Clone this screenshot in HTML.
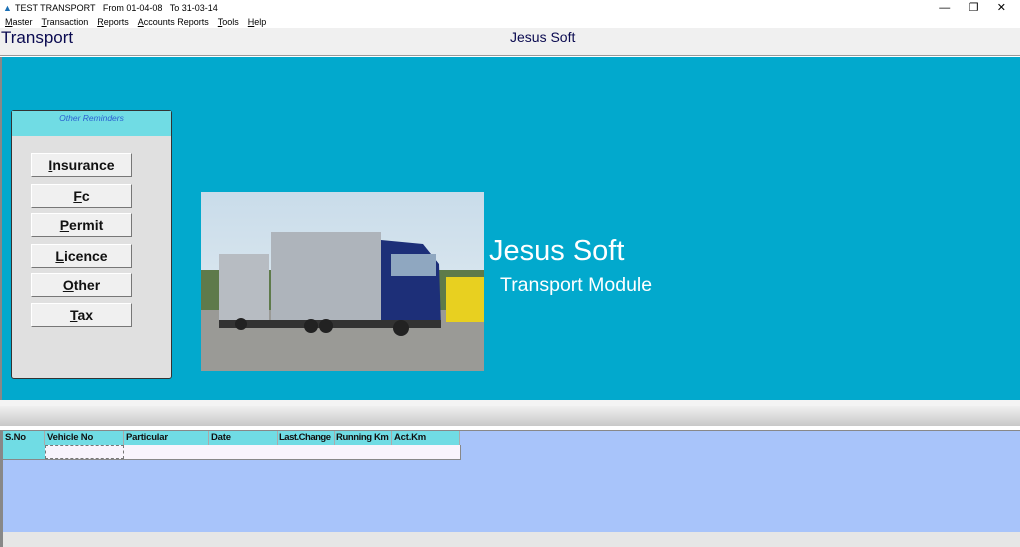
<!DOCTYPE html><html><head><style>
*{margin:0;padding:0;box-sizing:border-box}
body{width:1020px;height:547px;position:relative;overflow:hidden;background:#fff;font-family:"Liberation Sans",sans-serif}
.a{position:absolute}
.menu span{margin-right:9px}
.btn{position:absolute;left:31px;width:101px;height:24px;background:#f0f0f0;border:1px solid #fff;border-right-color:#777;border-bottom-color:#777;font-weight:bold;font-size:14px;text-align:center;line-height:22px;color:#111}
.th{position:absolute;top:431px;height:14px;background:#70dce4;border-right:1px solid #aaa;font-size:9.5px;font-weight:bold;padding-left:2px;line-height:14px;color:#111;white-space:nowrap;overflow:hidden;letter-spacing:-0.2px}
</style></head><body>
<div class="a" style="left:3px;top:3px;font-size:9px;color:#1a6fb5">▲</div>
<div class="a" style="left:15px;top:3px;font-size:9px">TEST TRANSPORT &nbsp; From 01-04-08 &nbsp; To 31-03-14</div>
<div class="a" style="right:14px;top:1px;font-size:11px;letter-spacing:0">—&nbsp;&nbsp;&nbsp;&nbsp;&nbsp;&nbsp;❐&nbsp;&nbsp;&nbsp;&nbsp;&nbsp;&nbsp;✕</div>
<div class="a menu" style="left:5px;top:17px;font-size:9px"><span><u>M</u>aster</span><span><u>T</u>ransaction</span><span><u>R</u>eports</span><span><u>A</u>ccounts Reports</span><span><u>T</u>ools</span><span><u>H</u>elp</span></div>
<div class="a" style="left:0;top:28px;width:1020px;height:28px;background:#f0f0f0;border-bottom:1px solid #999"></div>
<div class="a" style="left:1px;top:28px;font-size:17px;color:#0a0a50">Transport</div>
<div class="a" style="left:510px;top:29px;font-size:14px;color:#0a0a50">Jesus Soft</div>
<div class="a" style="left:0;top:57px;width:1020px;height:343px;background:#02a9cd;border-left:2px solid #888"></div>
<div class="a" style="left:11px;top:110px;width:161px;height:269px;background:#e0e0e0;border:1px solid #333;border-radius:3px"></div>
<div class="a" style="left:12px;top:111px;width:159px;height:25px;background:#70dce4;font-size:8.5px;font-style:italic;color:#2a5fd0;text-align:center;padding-top:2px">Other Reminders</div>
<div class="btn" style="top:153px"><u>I</u>nsurance</div>
<div class="btn" style="top:184px"><u>F</u>c</div>
<div class="btn" style="top:213px"><u>P</u>ermit</div>
<div class="btn" style="top:244px"><u>L</u>icence</div>
<div class="btn" style="top:273px"><u>O</u>ther</div>
<div class="btn" style="top:303px"><u>T</u>ax</div>
<svg class="a" style="left:201px;top:192px" width="283" height="179">
<defs><linearGradient id="s" x1="0" y1="0" x2="0" y2="1"><stop offset="0" stop-color="#c9dcea"/><stop offset="1" stop-color="#e6eef2"/></linearGradient></defs>
<rect width="283" height="179" fill="url(#s)"/>
<rect y="78" width="283" height="40" fill="#5e7a4a"/>
<rect y="118" width="283" height="61" fill="#9a9a96"/>
<rect x="245" y="85" width="38" height="45" fill="#e8d020"/>
<rect x="18" y="62" width="50" height="68" fill="#b7bcc2"/>
<rect x="70" y="40" width="110" height="90" fill="#aeb4bb"/>
<path d="M180 48 L222 52 L238 72 L240 135 L180 135Z" fill="#1d2f78"/>
<rect x="190" y="62" width="45" height="22" fill="#8fa7c0"/>
<rect x="18" y="128" width="222" height="8" fill="#333"/>
<circle cx="40" cy="132" r="6" fill="#222"/><circle cx="110" cy="134" r="7" fill="#222"/><circle cx="125" cy="134" r="7" fill="#222"/><circle cx="200" cy="136" r="8" fill="#222"/>
</svg>
<div class="a" style="left:489px;top:235px;font-size:29px;color:#fff">Jesus Soft</div>
<div class="a" style="left:500px;top:274px;font-size:19.5px;color:#fff">Transport Module</div>
<div class="a" style="left:0;top:400px;width:1020px;height:6px;background:#f4f4f4"></div>
<div class="a" style="left:0;top:406px;width:1020px;height:20px;background:linear-gradient(#f0f0f0,#c8c8c8)"></div>
<div class="a" style="left:0;top:430px;width:1020px;height:102px;background:#a8c4fa;border-left:3px solid #888;border-top:1px solid #888"></div>
<div class="a" style="left:0;top:532px;width:1020px;height:15px;background:#e6e6e6;border-left:3px solid #888"></div>
<div class="th" style="left:3px;width:42px">S.No</div>
<div class="th" style="left:45px;width:79px">Vehicle No</div>
<div class="th" style="left:124px;width:85px">Particular</div>
<div class="th" style="left:209px;width:69px">Date</div>
<div class="th" style="left:278px;width:57px;padding-left:1px;letter-spacing:-0.5px">Last.Change</div>
<div class="th" style="left:335px;width:57px;padding-left:1px;letter-spacing:-0.4px">Running Km</div>
<div class="th" style="left:392px;width:68px">Act.Km</div>
<div class="a" style="left:3px;top:445px;width:458px;height:15px;background:#f8f4fc;border:1px solid #888;border-top:none"></div>
<div class="a" style="left:3px;top:445px;width:42px;height:14px;background:#70dce4"></div>
<div class="a" style="left:45px;top:445px;width:79px;height:14px;border:1px dashed #777;background:#f8f4fc"></div>
</body></html>
